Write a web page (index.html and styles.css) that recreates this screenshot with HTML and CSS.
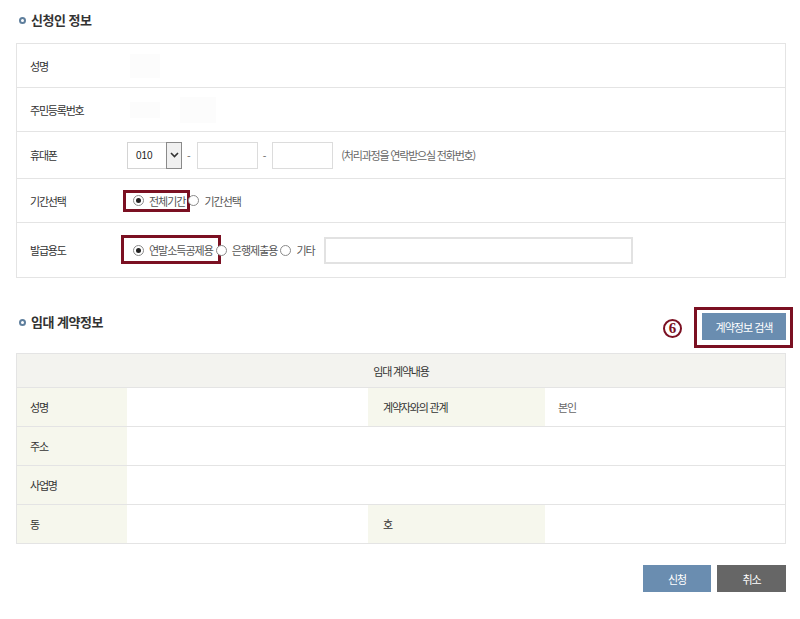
FILE: index.html
```html
<!DOCTYPE html>
<html lang="ko">
<head>
<meta charset="utf-8">
<title>신청인 정보</title>
<link rel="stylesheet" href="styles.css">
</head>
<body>
<div class="page">
  <h2 class="sec-title"><span class="dot"></span>신청인 정보</h2>
  <div class="form-table">
    <div class="frow h43">
      <div class="flabel">성명</div>
      <div class="fval"><span class="blur b1"></span></div>
    </div>
    <div class="frow h43">
      <div class="flabel">주민등록번호</div>
      <div class="fval"><span class="blur b2"></span><span class="blur b3"></span></div>
    </div>
    <div class="frow h46">
      <div class="flabel">휴대폰</div>
      <div class="fval">
        <div class="sel"><span class="sel-text">010</span><span class="sel-arrow"><svg width="9" height="6" viewBox="0 0 9 6"><path d="M1 1 L4.5 4.5 L8 1" fill="none" stroke="#333" stroke-width="1.6"/></svg></span></div>
        <span class="dash">-</span>
        <span class="inp w61"></span>
        <span class="dash">-</span>
        <span class="inp w61"></span>
        <span class="hint">(처리과정을 연락받으실 전화번호)</span>
      </div>
    </div>
    <div class="frow h43">
      <div class="flabel">기간선택</div>
      <div class="fval">
        <span class="opt"><span class="radio on"></span>전체기간<span class="mark m1"></span></span>
        <span class="opt"><span class="radio"></span>기간선택</span>
      </div>
    </div>
    <div class="frow h54">
      <div class="flabel">발급용도</div>
      <div class="fval">
        <span class="opt"><span class="radio on"></span>연말소득공제용<span class="mark m2"></span></span>
        <span class="opt"><span class="radio"></span>은행제출용</span>
        <span class="opt"><span class="radio"></span>기타</span>
        <span class="inp w309"></span>
      </div>
    </div>
  </div>

  <div class="sec-head">
    <h2 class="sec-title t2"><span class="dot"></span>임대 계약정보</h2>
    <div class="head-right">
      <span class="num">6</span>
      <span class="btn-wrap"><span class="btn blue wsearch">계약정보 검색</span><span class="mark m3"></span></span>
    </div>
  </div>

  <div class="ctable">
    <div class="chead">임대 계약내용</div>
    <div class="clabel">성명</div>
    <div class="cval"></div>
    <div class="clabel pl15">계약자와의 관계</div>
    <div class="cval plain">본인</div>
    <div class="clabel">주소</div>
    <div class="cval span3"></div>
    <div class="clabel">사업명</div>
    <div class="cval span3"></div>
    <div class="clabel">동</div>
    <div class="cval"></div>
    <div class="clabel pl15">호</div>
    <div class="cval"></div>
  </div>

  <div class="actions">
    <span class="btn blue w68">신청</span>
    <span class="btn gray w69">취소</span>
  </div>
</div>
</body>
</html>
```

FILE: styles.css
```css
body {
  margin: 0;
  background: #fff;
  font-family: "Noto Sans CJK KR", "Noto Sans", sans-serif;
  color: #333;
  font-size: 11px;
}
.page {
  padding: 10px 14px 0 16px;
}
.sec-title {
  margin: 0 0 13px;
  height: 20px;
  line-height: 20px;
  font-size: 13px;
  font-weight: bold;
  letter-spacing: -0.5px;
  color: #333;
  display: flex;
  align-items: center;
  padding-left: 3px;
}
.dot {
  width: 7px;
  height: 7px;
  border: 2px solid #5f7f9d;
  border-radius: 50%;
  box-sizing: border-box;
  margin-right: 5px;
}
.form-table {
  border: 1px solid #e4e4e4;
  border-bottom: none;
}
.frow {
  display: flex;
  align-items: center;
  border-bottom: 1px solid #e4e4e4;
}
.h43 { height: 43px; }
.h46 { height: 46px; }
.h54 { height: 54px; }
.flabel {
  width: 110px;
  padding-left: 13px;
  box-sizing: border-box;
  letter-spacing: -1.2px;
  color: #333;
}
.fval {
  flex: 1;
  display: flex;
  align-items: center;
  position: relative;
  height: 100%;
}
.blur {
  display: inline-block;
  background: #fcfcfc;
}
.b1 { width: 30px; height: 24px; margin-left: 3px; }
.b2 { width: 30px; height: 16px; margin-left: 3px; }
.b3 { width: 36px; height: 26px; margin-left: 20px; }
.sel {
  display: flex;
  width: 55px;
  height: 27px;
  border: 1px solid #d4d4d4;
  box-sizing: border-box;
}
.sel-text {
  flex: 1;
  padding-left: 8px;
  line-height: 25px;
  font-family: "Liberation Sans", sans-serif;
  font-size: 10px;
  color: #222;
}
.sel-arrow {
  width: 14px;
  border: 1px solid #8a8a8a;
  margin: -1px -1px -1px 0;
  background: #f0f0f0;
  display: flex;
  align-items: center;
  justify-content: center;
}
.dash {
  color: #777;
  margin: 0 6px 0 5px;
  font-family: "Liberation Sans", sans-serif;
}
.inp {
  display: inline-block;
  height: 27px;
  border: 1px solid #dcdcdc;
  box-sizing: border-box;
  background: #fff;
}
.w61 { width: 61px; }
.w309 { width: 309px; margin-left: 9px; border: 2px solid #e2e2e2; }
.hint {
  margin-left: 8px;
  color: #666;
  font-size: 11px;
  letter-spacing: -1.2px;
}
.opt {
  position: relative;
  display: inline-flex;
  align-items: center;
  height: 14px;
  color: #555;
  letter-spacing: -1px;
}
.opt:first-child { margin-left: 3px; }
.radio {
  width: 11px;
  height: 11px;
  border: 1px solid #8a8a8a;
  border-radius: 50%;
  box-sizing: border-box;
  margin-right: 5px;
  margin-left: 3px;
  position: relative;
  background: #fff;
}
.radio.on::after {
  content: "";
  position: absolute;
  left: 2px;
  top: 2px;
  width: 5px;
  height: 5px;
  border-radius: 50%;
  background: #222;
}
.mark {
  position: absolute;
  border: 3px solid #7b1022;
  pointer-events: none;
}
.m1 { left: -7px; right: -5px; top: -4px; bottom: -4px; }
.m2 { left: -9px; right: -8px; top: -8px; bottom: -7px; }
.m3 { left: -8px; right: -7px; top: -6px; bottom: -8px; }

.sec-head {
  display: flex;
  justify-content: space-between;
  align-items: flex-start;
  margin-top: 35px;
}
.sec-title.t2 { margin: -1px 0 0; }
.head-right {
  display: flex;
  align-items: center;
}
.num {
  width: 19px;
  height: 19px;
  border: 2px solid #7b1022;
  border-radius: 50%;
  box-sizing: border-box;
  color: #7b1022;
  font-family: "Liberation Serif", serif;
  font-weight: bold;
  font-size: 15px;
  line-height: 15px;
  text-align: center;
  margin-right: 20px;
  margin-top: 3px;
}
.btn-wrap { position: relative; display: inline-flex; }
.btn {
  display: inline-flex;
  align-items: center;
  justify-content: center;
  height: 27px;
  color: #fff;
  font-size: 11px;
  letter-spacing: -1px;
}
.blue { background: #6a8db0; }
.gray { background: #666; }
.wsearch { width: 84px; }
.w68 { width: 68px; }
.w69 { width: 69px; }

.ctable {
  margin-top: 13px;
  border: 1px solid #e4e4e4;
  border-bottom: none;
  display: grid;
  grid-template-columns: 110px 241px 177px 240px;
}
.ctable > div {
  height: 38px;
  border-bottom: 1px solid #e4e4e4;
  display: flex;
  align-items: center;
  letter-spacing: -1.2px;
}
.ctable > .chead {
  grid-column: 1 / -1;
  height: 33px;
  background: #f3f3ef;
  justify-content: center;
  color: #333;
}
.clabel {
  background: #f6f7ed;
  padding-left: 13px;
  color: #333;
}
.pl15 { padding-left: 15px; }
.cval { background: #fff; }
.cval.plain { padding-left: 13px; color: #666; }
.span3 { grid-column: 2 / -1; }

.actions {
  display: flex;
  justify-content: flex-end;
  gap: 6px;
  margin-top: 21px;
}
```
